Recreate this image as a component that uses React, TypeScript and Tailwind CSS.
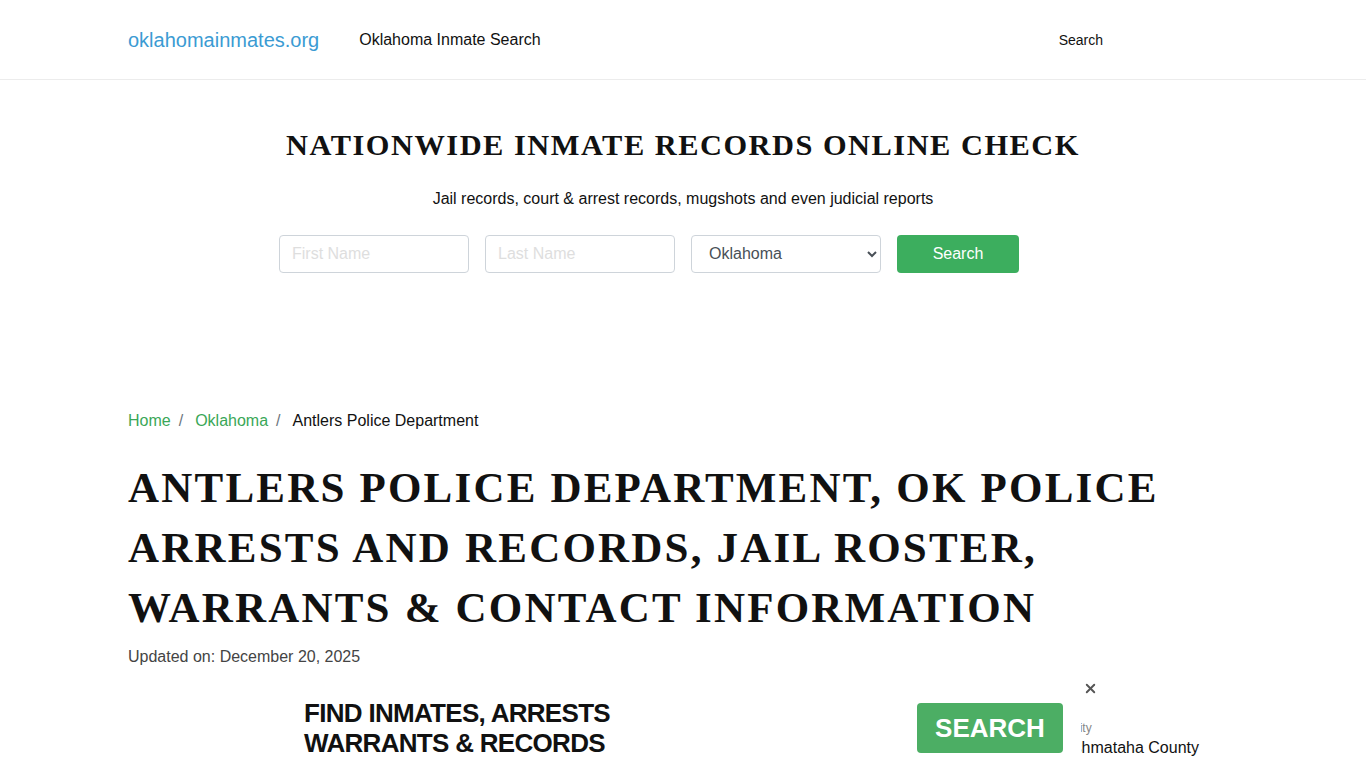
import { X } from "lucide-react";

const sans = "font-['Liberation_Sans',Arial,sans-serif]";
const serif = "font-['Liberation_Serif','Times_New_Roman',serif]";

function Header() {
  return (
    <header className="h-20 border-b border-[#ececec] bg-white">
      <div className="mx-auto flex h-full w-[1110px] items-center">
        <a className="text-[20px] text-[#3b9bd3]">oklahomainmates.org</a>
        <a className="ml-[40px] text-[16px] text-[#111]">Oklahoma Inmate Search</a>
        <a className="ml-auto mr-[135px] mt-[2px] text-[14px] text-[#111]">Search</a>
      </div>
    </header>
  );
}

function SearchPanel() {
  const field =
    "h-[38px] w-[190px] rounded-[4px] border border-[#ced4da] bg-white px-3 text-[16px] text-[#495057] placeholder:text-[#dedede] outline-none";
  return (
    <section className="flex flex-col items-center pt-[43px]">
      <h2 className={`${serif} text-[30.4px] font-bold tracking-[1.5px] text-[#111]`}>
        NATIONWIDE INMATE RECORDS ONLINE CHECK
      </h2>
      <p className="mt-[18px] text-[16px] text-[#111]">
        Jail records, court &amp; arrest records, mugshots and even judicial reports
      </p>
      <form className="mr-[68px] mt-[24px] flex gap-4">
        <input className={field} placeholder="First Name" />
        <input className={field} placeholder="Last Name" />
        <select className={`${field} pl-[13px]`} defaultValue="Oklahoma">
          <option>Oklahoma</option>
        </select>
        <button
          type="button"
          className="h-[38px] w-[122px] rounded-[4px] bg-[#3cae5e] text-[16px] text-white"
        >
          Search
        </button>
      </form>
    </section>
  );
}

function AdBar() {
  return (
    <div className="fixed bottom-0 left-[290px] h-[80px] w-[791px] bg-white">
      <div className="flex h-full items-center pl-[14px]">
        <div className="text-[26px] font-bold leading-[30px] tracking-[-0.7px] text-[#111]">
          <div>FIND INMATES, ARRESTS</div>
          <div>WARRANTS &amp; RECORDS</div>
        </div>
        <button
          type="button"
          className="ml-auto mr-[18px] h-[50px] w-[146px] rounded-[4px] bg-[#4cae64] text-[26px] font-bold text-white"
        >
          SEARCH
        </button>
      </div>
    </div>
  );
}

export default function App() {
  return (
    <div className={`${sans} min-h-[768px] bg-white pb-[60px]`}>
      <Header />
      <SearchPanel />
      <main className="mx-auto mt-[136px] w-[1110px]">
        <nav className="flex items-center text-[16px]">
          <a className="text-[#3aa757]">Home</a>
          <span className="pl-2 pr-[10px] text-[#6c757d]">/</span>
          <a className="pl-[2px] text-[#3aa757]">Oklahoma</a>
          <span className="pl-2 pr-[10px] text-[#6c757d]">/</span>
          <span className="pl-[2px] text-[#111]">Antlers Police Department</span>
        </nav>
        <h1
          className={`${serif} mt-[25px] text-[43px] font-bold leading-[60px] tracking-[2.2px] text-[#111]`}
        >
          ANTLERS POLICE DEPARTMENT, OK POLICE ARRESTS AND RECORDS, JAIL ROSTER,
          WARRANTS &amp; CONTACT INFORMATION
        </h1>
        <p className="mt-[7px] text-[16px] text-[#444]">Updated on: December 20, 2025</p>
        <div className="mt-[50px] flex flex-col">
          <span className="ml-[903px] text-[12px] leading-[18px] text-[#888]">Community</span>
          <span className="ml-[926px] text-[16px] leading-[22px] text-[#111]">Pushmataha County</span>
        </div>
      </main>
      <AdBar />
      <button
        type="button"
        className="fixed left-[1083px] top-[681px] text-[#555]"
        aria-label="close"
      >
        <X size={15} strokeWidth={3} />
      </button>
    </div>
  );
}
